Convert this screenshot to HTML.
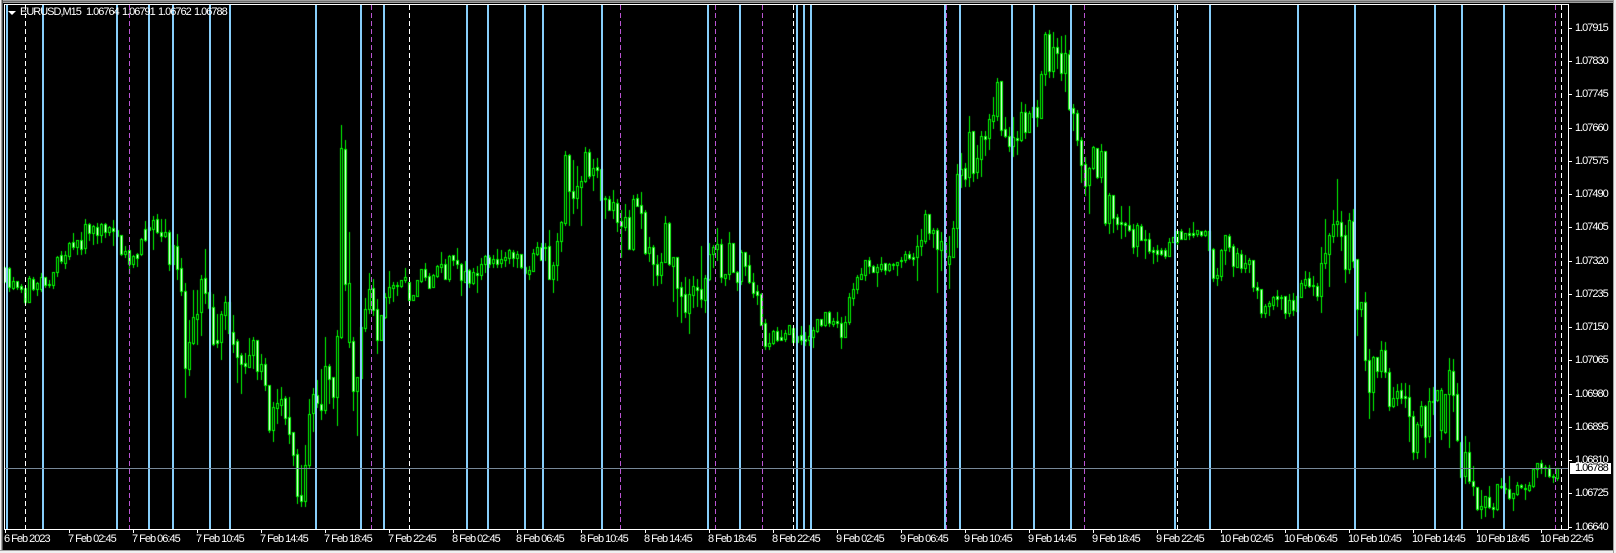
<!DOCTYPE html>
<html><head><meta charset="utf-8"><title>EURUSD,M15</title>
<style>
html,body{margin:0;padding:0;background:#000;width:1616px;height:553px;overflow:hidden}
body{position:relative;font-family:"Liberation Sans",sans-serif;color:#fff}
.a{position:absolute}
canvas{position:absolute;left:0;top:0}
.b{position:absolute;top:5px;height:524px;width:2px;background:#87cefa}
.p,.w{position:absolute;top:5px;height:524px;width:1px}
.p{background:repeating-linear-gradient(to bottom,#ba55d3 0 5px,transparent 5px 8px)}
.w{background:repeating-linear-gradient(to bottom,#fff 0 5px,transparent 5px 8px)}
.t{position:absolute;font-size:11px;letter-spacing:-1px;line-height:12px;height:12px;white-space:nowrap;color:#fff}
.y{left:1575px}
.x{top:533px}
.yt{position:absolute;left:1569px;width:3px;height:1px;background:#fff}
.xt{position:absolute;top:530px;width:1px;height:3px;background:#fff}
</style></head><body>
<canvas id="c" width="1616" height="553"></canvas>

<div class="a" style="left:0;top:0;width:1616px;height:1px;background:#a0a0a0"></div>
<div class="a" style="left:0;top:1px;width:1616px;height:1px;background:#696969"></div>
<div class="a" style="left:0;top:2px;width:1616px;height:1px;background:#a0a0a0"></div>
<div class="a" style="left:0;top:0;width:1px;height:553px;background:#f0f0f0"></div>
<div class="a" style="left:1px;top:0;width:1px;height:553px;background:#a0a0a0"></div>
<div class="a" style="left:2px;top:0;width:1px;height:553px;background:#505050"></div>
<div class="a" style="left:0;top:550px;width:1616px;height:1px;background:#a0a0a0"></div>
<div class="a" style="left:0;top:551px;width:1616px;height:2px;background:#f0f0f0"></div>
<div class="a" style="left:1613px;top:0;width:1px;height:553px;background:#a0a0a0"></div>
<div class="a" style="left:1614px;top:0;width:2px;height:553px;background:#f0f0f0"></div>

<div class="w" style="left:25px"></div><div class="w" style="left:409px"></div><div class="w" style="left:793px"></div><div class="w" style="left:1177px"></div><div class="w" style="left:1561px"></div>
<div class="p" style="left:129px"></div><div class="p" style="left:371px"></div><div class="p" style="left:620px"></div><div class="p" style="left:715px"></div><div class="p" style="left:762px"></div><div class="p" style="left:946px"></div><div class="p" style="left:1084px"></div><div class="p" style="left:1555px"></div>

<div class="b" style="left:6px"></div><div class="b" style="left:42px"></div><div class="b" style="left:116px"></div><div class="b" style="left:148px"></div><div class="b" style="left:172px"></div><div class="b" style="left:209px"></div><div class="b" style="left:229px"></div><div class="b" style="left:315px"></div><div class="b" style="left:360px"></div><div class="b" style="left:383px"></div><div class="b" style="left:466px"></div><div class="b" style="left:487px"></div><div class="b" style="left:524px"></div><div class="b" style="left:542px"></div><div class="b" style="left:601px"></div><div class="b" style="left:707px"></div><div class="b" style="left:739px"></div><div class="b" style="left:796px"></div><div class="b" style="left:803px"></div><div class="b" style="left:810px"></div><div class="b" style="left:944px"></div><div class="b" style="left:959px"></div><div class="b" style="left:1011px"></div><div class="b" style="left:1033px"></div><div class="b" style="left:1070px"></div><div class="b" style="left:1174px"></div><div class="b" style="left:1209px"></div><div class="b" style="left:1297px"></div><div class="b" style="left:1354px"></div><div class="b" style="left:1434px"></div><div class="b" style="left:1461px"></div><div class="b" style="left:1503px"></div>

<div class="a" style="left:5px;top:468px;width:1563px;height:1px;background:#778899"></div>

<div class="a" style="left:4px;top:4px;width:1565px;height:1px;background:#fff"></div>
<div class="a" style="left:4px;top:4px;width:1px;height:526px;background:#fff"></div>
<div class="a" style="left:1568px;top:4px;width:1px;height:526px;background:#fff"></div>
<div class="a" style="left:4px;top:529px;width:1565px;height:1px;background:#fff"></div>

<div class="a" style="left:8px;top:11px;width:0;height:0;border-left:4px solid transparent;border-right:4px solid transparent;border-top:4px solid #fff"></div>
<div class="t" style="left:20px;top:6px">EURUSD,M15</div>
<div class="t" style="left:86px;top:6px">1.06764</div>
<div class="t" style="left:122px;top:6px">1.06791</div>
<div class="t" style="left:158px;top:6px">1.06762</div>
<div class="t" style="left:194px;top:6px">1.06788</div>

<div class="yt" style="top:28px"></div><div class="yt" style="top:61px"></div><div class="yt" style="top:94px"></div><div class="yt" style="top:128px"></div><div class="yt" style="top:161px"></div><div class="yt" style="top:194px"></div><div class="yt" style="top:227px"></div><div class="yt" style="top:261px"></div><div class="yt" style="top:294px"></div><div class="yt" style="top:327px"></div><div class="yt" style="top:360px"></div><div class="yt" style="top:394px"></div><div class="yt" style="top:427px"></div><div class="yt" style="top:460px"></div><div class="yt" style="top:493px"></div><div class="yt" style="top:527px"></div>

<div class="t y" style="top:22px">1.07915</div>
<div class="t y" style="top:55px">1.07830</div>
<div class="t y" style="top:88px">1.07745</div>
<div class="t y" style="top:122px">1.07660</div>
<div class="t y" style="top:155px">1.07575</div>
<div class="t y" style="top:188px">1.07490</div>
<div class="t y" style="top:221px">1.07405</div>
<div class="t y" style="top:255px">1.07320</div>
<div class="t y" style="top:288px">1.07235</div>
<div class="t y" style="top:321px">1.07150</div>
<div class="t y" style="top:354px">1.07065</div>
<div class="t y" style="top:388px">1.06980</div>
<div class="t y" style="top:421px">1.06895</div>
<div class="t y" style="top:454px">1.06810</div>
<div class="t y" style="top:487px">1.06725</div>
<div class="t y" style="top:521px">1.06640</div>
<div class="a" style="left:1570px;top:463px;width:41px;height:11px;background:#fff"></div>
<div class="t y" style="top:462px;color:#000">1.06788</div>

<div class="xt" style="left:5px"></div><div class="xt" style="left:69px"></div><div class="xt" style="left:133px"></div><div class="xt" style="left:197px"></div><div class="xt" style="left:261px"></div><div class="xt" style="left:325px"></div><div class="xt" style="left:389px"></div><div class="xt" style="left:453px"></div><div class="xt" style="left:517px"></div><div class="xt" style="left:581px"></div><div class="xt" style="left:645px"></div><div class="xt" style="left:709px"></div><div class="xt" style="left:773px"></div><div class="xt" style="left:837px"></div><div class="xt" style="left:901px"></div><div class="xt" style="left:965px"></div><div class="xt" style="left:1029px"></div><div class="xt" style="left:1093px"></div><div class="xt" style="left:1157px"></div><div class="xt" style="left:1221px"></div><div class="xt" style="left:1285px"></div><div class="xt" style="left:1349px"></div><div class="xt" style="left:1413px"></div><div class="xt" style="left:1477px"></div><div class="xt" style="left:1541px"></div>

<div class="t x" style="left:4px">6 Feb 2023</div>
<div class="t x" style="left:68px">7 Feb 02:45</div>
<div class="t x" style="left:132px">7 Feb 06:45</div>
<div class="t x" style="left:196px">7 Feb 10:45</div>
<div class="t x" style="left:260px">7 Feb 14:45</div>
<div class="t x" style="left:324px">7 Feb 18:45</div>
<div class="t x" style="left:388px">7 Feb 22:45</div>
<div class="t x" style="left:452px">8 Feb 02:45</div>
<div class="t x" style="left:516px">8 Feb 06:45</div>
<div class="t x" style="left:580px">8 Feb 10:45</div>
<div class="t x" style="left:644px">8 Feb 14:45</div>
<div class="t x" style="left:708px">8 Feb 18:45</div>
<div class="t x" style="left:772px">8 Feb 22:45</div>
<div class="t x" style="left:836px">9 Feb 02:45</div>
<div class="t x" style="left:900px">9 Feb 06:45</div>
<div class="t x" style="left:964px">9 Feb 10:45</div>
<div class="t x" style="left:1028px">9 Feb 14:45</div>
<div class="t x" style="left:1092px">9 Feb 18:45</div>
<div class="t x" style="left:1156px">9 Feb 22:45</div>
<div class="t x" style="left:1220px">10 Feb 02:45</div>
<div class="t x" style="left:1284px">10 Feb 06:45</div>
<div class="t x" style="left:1348px">10 Feb 10:45</div>
<div class="t x" style="left:1412px">10 Feb 14:45</div>
<div class="t x" style="left:1476px">10 Feb 18:45</div>
<div class="t x" style="left:1540px">10 Feb 22:45</div>

<script>
var blocks=[
[0,190,"16,230,275,230,275,w 28,235,292,232,303,w 40,274,293,262,296,b 52,274,290,272,296,w 64,289,296,283,306,w 76,295,335,295,342,w 88,265,335,258,336,b 100,268,296,262,300,w 112,280,297,275,315,b 124,262,297,250,303,b 136,262,284,262,290,w 148,283,285,270,290,w 160,247,284,247,295,b 172,201,247,198,258,b 184,196,214,183,218,w 196,195,218,183,234,b 208,160,197,155,207,b 220,157,170,128,177,w 232,151,170,150,192,b 244,151,176,126,191,w 256,103,173,87,190,b 268,103,130,100,150,w 280,109,129,105,162,b 292,112,136,100,158,w 304,103,134,98,155,b 316,103,125,100,140,w 328,112,125,108,135,b 340,115,124,90,165,w 352,120,138,120,138,w 364,136,191,136,195,w 376,184,191,168,200,b 388,181,221,181,250,w 400,198,221,196,231,b 412,192,203,188,228,w 424,148,191,145,195,b 436,118,149,93,152,w 448,110,120,110,120,w 460,91,116,78,177,b 472,88,125,72,128,w 484,127,137,87,153,w 496,127,137,87,140,b 508,127,221,120,240,w 520,165,222,165,222,b 532,169,236,132,266,w 544,235,302,204,315,w 556,304,533,280,620,w 568,457,537,390,555,b 580,382,458,300,463,b 592,373,386,300,462,b 604,268,365,255,435,b 616,265,308,177,340,w 628,306,353,306,353,w 640,352,461,312,465,w 652,451,458,372,472,w 664,373,455,362,506,b 676,337,374,318,418,b 688,337,430,337,430,b 700,427,461,375,487,w 712,454,500,447,575,w 724,496,521,490,608,w 736,520,527,490,548,w 748,496,530,445,530,b 760,451,494,441,533,b 772,451,542,451,567,w 784,523,543,491,567,b 796,523,584,503,600,w 808,586,720,586,725,w 820,652,720,636,752,b 832,640,653,598,698,b 844,628,644,591,675,b 856,625,683,618,702,w 868,682,731,622,758,w 880,727,794,727,825,w 892,793,917,778,938,w 904,916,932,825,947,w 916,826,932,765,947,b 928,673,824,627,834,b 940,613,670,593,722,b 952,615,640,570,650,w 964,643,659,537,687,w 976,529,659,441,668,b 988,529,566,522,640,w 1000,562,620,562,655,w 1012,439,620,420,705,b 1024,-126,440,-195,445,b 1036,-122,281,-150,300,w 1048,280,455,126,470,b 1060,454,602,442,660,w 1072,562,602,562,735,b 1084,412,563,412,563,b 1096,358,413,325,423,b 1108,298,357,250,370,b 1120,295,360,267,375,w 1132,358,449,328,488,w 1144,376,449,376,450,b 1156,322,380,310,385,b 1168,292,322,243,338,b 1180,286,293,277,333,b 1192,285,288,277,316,w"],
[400,130,"4,451,467,451,470,b 16,442,449,415,455,b 28,457,509,457,512,w 40,496,509,496,510,b 52,451,497,451,497,b 64,418,453,418,456,b 76,418,440,400,450,w 88,439,473,430,473,w 100,436,470,433,470,b 112,408,437,405,440,b 124,401,410,366,425,b 136,401,446,388,448,w 148,379,446,376,453,b 160,376,389,376,405,w 172,391,401,354,415,w 184,402,449,400,495,w 196,422,455,393,455,b 208,421,458,418,472,w 220,427,458,415,462,b 232,430,434,407,486,w 244,403,434,385,447,b 256,379,402,376,427,b 268,382,401,375,411,w 280,388,399,375,411,b 292,388,402,358,412,w 304,388,399,361,410,b 316,382,389,365,408,b 328,361,383,357,400,b 340,365,383,360,408,w 352,373,383,362,410,b 364,373,410,372,413,w 376,410,430,408,432,w 388,421,431,408,447,b 400,370,422,358,422,b 412,352,372,335,375,b 424,350,390,340,390,w 436,350,353,340,390,w 448,347,446,300,446,w 460,406,446,395,486,b 472,334,406,308,450,b 484,277,334,273,363,b 496,76,278,63,285,b 508,76,182,72,285,w 520,184,203,90,248,w 532,169,203,108,235,b 544,154,172,138,285,b 556,67,154,52,157,b 568,67,137,57,145,w 580,113,134,87,180,b 592,112,119,84,140,w 604,118,210,118,210,w 616,205,208,198,264,w 628,208,239,198,241,w 640,217,239,180,265,b 652,220,275,207,303,w 664,272,289,240,380,w 676,262,290,222,300,b 688,262,356,240,358,w 700,208,356,195,360,b 712,205,227,192,228,w 724,226,248,186,294,w 736,247,370,240,372,w 748,352,368,322,392,b 760,352,403,345,465,w 772,403,434,375,465,w 784,397,434,368,458,b 796,280,395,258,397,b 808,280,403,275,405,w 820,382,407,380,513,b 832,382,473,380,558,w 844,472,497,457,575,w 856,493,545,440,560,w 868,493,548,447,608,b 880,469,494,438,530,b 892,472,479,447,528,w 904,478,506,348,530,w 916,445,509,435,545,b 928,372,447,340,450,b 940,352,373,345,410,b 952,343,357,293,390,b 964,343,440,327,456,w 976,433,443,433,465,b 988,340,431,306,446,b 1000,340,425,340,425,w 1012,427,455,422,480,w 1024,367,453,360,462,b 1036,367,407,367,436,w 1048,406,455,375,460,w 1060,457,488,430,500,w 1072,484,494,465,522,w 1084,493,584,490,585,w 1096,580,647,567,657,w 1108,640,647,608,657,b 1120,603,640,600,643,b 1132,603,630,590,632,w 1144,622,629,600,630,w 1156,610,627,600,632,b 1168,586,611,586,611,b 1180,595,635,595,637,w 1192,618,636,618,636,w"],
[800,20,"4,946,961,918,972,w 16,958,962,937,975,w 28,948,960,915,975,b 40,931,950,922,980,b 52,898,933,898,935,b 64,898,915,898,917,w 76,877,915,877,917,b 88,877,908,873,918,w 100,904,912,895,918,b 112,904,908,877,922,w 124,910,950,892,984,w 136,905,950,888,950,b 148,832,905,820,912,b 160,808,833,790,855,b 172,772,806,765,818,b 184,763,776,745,776,b 196,721,764,721,780,b 208,721,737,712,760,w 220,737,755,735,755,w 232,742,755,732,798,b 244,733,746,712,752,b 256,730,749,728,762,w 268,733,749,730,752,b 280,732,735,730,748,w 292,725,734,725,765,b 304,720,724,712,740,w 316,703,719,693,725,b 328,703,714,693,718,w 340,712,716,700,735,w 352,679,712,645,780,b 364,661,677,628,705,b 376,583,662,570,668,b 388,583,638,583,657,w 400,631,638,625,681,b 412,631,688,625,815,w 424,664,689,637,750,b 436,670,710,670,710,b 448,709,731,648,803,b 460,625,710,603,710,b 472,463,625,432,680,b 484,448,465,400,500,b 496,445,476,430,497,w 508,337,470,288,497,b 520,334,458,334,482,w 532,415,456,375,473,b 544,349,416,333,467,b 556,349,356,333,404,w 568,298,353,282,387,b 580,286,302,232,323,b 592,187,288,175,300,b 604,184,329,184,345,w 616,328,347,292,352,w 628,349,377,320,392,w 640,352,377,292,408,b 652,355,361,333,402,w 664,277,359,246,362,b 676,277,335,252,353,w 688,280,335,273,335,b 700,262,290,262,290,b 712,262,290,240,318,w 724,163,293,153,295,b 736,43,163,37,195,b 748,43,152,30,170,w 760,82,152,37,170,b 772,80,100,55,145,w 784,98,158,48,180,w 796,100,158,45,213,b 808,103,267,90,270,w 820,265,280,252,330,w 832,280,359,270,375,w 844,361,434,352,485,w 856,431,497,410,525,w 868,445,495,440,578,b 880,381,445,378,448,b 892,385,471,385,473,w 904,394,470,372,486,b 916,394,608,394,615,w 928,526,608,520,638,b 940,526,593,526,635,w 952,592,611,582,628,w 964,606,612,558,653,w 976,610,614,606,648,w 988,614,630,558,632,w 1000,628,680,612,698,w 1012,616,677,608,707,b 1024,619,659,612,660,w 1036,657,660,630,713,w 1048,658,692,640,698,w 1060,690,695,680,728,w 1072,691,701,675,722,w 1084,691,701,685,705,w 1096,691,707,685,713,w 1108,667,707,655,707,b 1120,652,667,652,667,b 1132,634,665,634,683,b 1144,632,656,628,658,w 1156,640,656,640,656,b 1168,640,644,625,656,w 1180,640,644,606,650,w 1192,631,641,631,648,b"],
[1180,170,"64,184,195,184,197,w 76,184,195,180,197,b 88,184,240,184,240,b 100,238,323,235,333,w 112,316,323,295,345,b 124,240,317,238,330,b 136,196,241,196,283,b 148,199,231,193,243,w 160,229,287,222,318,w 172,250,290,235,292,b 184,253,294,241,306,w 196,280,294,256,305,b 208,270,281,265,305,b 220,271,351,271,362,w 232,351,359,337,385,w 244,358,428,358,440,w 256,408,429,402,441,b 268,400,407,392,435,b 280,381,404,378,417,b 292,379,386,360,408,w 304,382,385,376,417,w 316,379,428,379,443,w 328,391,428,372,438,b 340,391,419,370,435,w 352,378,422,378,422,b 364,340,380,330,380,b 376,328,344,303,353,b 388,325,347,306,352,w 400,346,348,318,374,w 412,347,377,340,390,w 424,280,377,232,425,b 436,250,278,147,293,b 448,196,251,190,347,b 460,163,197,120,215,b 472,154,163,27,197,b 484,157,197,123,240,w 496,196,298,165,335,w 508,151,296,130,308,b 520,153,272,118,290,w 532,268,416,268,495,w 544,397,417,397,437,b 556,397,569,367,600,w 568,569,665,538,743,w 580,562,665,558,720,b 592,560,602,560,622,w 604,541,603,514,620,b 616,541,607,517,622,w 628,607,707,593,720,w 640,685,708,650,712,b 652,664,683,642,705,b 664,661,683,640,698,w 676,679,683,640,710,w 688,682,737,645,812,w 700,737,845,722,867,w 712,763,845,755,865,b 724,709,766,693,770,b 736,708,800,705,860,w 748,694,797,653,815,b 760,692,695,652,732,b 772,661,691,661,692,b 784,661,781,655,808,b 796,673,785,673,788,b 808,601,673,565,832,b 820,604,674,567,722,w 832,673,811,640,813,w 844,815,920,815,920,w 856,847,917,798,940,b 868,847,932,815,940,w 880,934,949,888,975,w 892,952,1016,950,1019,w 904,1009,1016,960,1043,b 916,979,1010,979,1037,b 928,982,1010,948,1015,w 940,1010,1018,998,1040,w 952,943,1018,943,1020,b 964,947,952,925,955,w 976,953,957,940,970,w 988,958,983,918,986,w 1000,970,983,970,1019,b 1012,946,971,936,974,b 1024,946,952,942,955,w 1036,954,958,942,986,w 1048,946,960,936,962,b 1060,897,947,897,950,b 1072,880,896,878,920,b 1084,880,893,870,910,w 1096,892,895,885,918,w 1108,895,919,885,920,w 1120,919,922,913,935,w 1132,895,924,893,930,b"]
];
var g=document.getElementById("c").getContext("2d");
g.fillStyle="#000";g.fillRect(0,0,1616,553);
blocks.forEach(function(B){
  B[2].split(" ").forEach(function(s){
    var v=s.split(","),X=Math.floor(B[0]+v[0]/3),
        Y=function(z){return Math.round(B[1]+z/3)},
        t=Y(+v[1]),b=Y(+v[2]),h=Y(+v[3]),l=Y(+v[4]);
    if(b<=t)b=t+1;
    g.fillStyle="#00ff00";
    g.fillRect(X,h,1,Math.max(1,l-h+1));
    g.fillRect(X-1,t,3,b-t+1);
    if(b-t>=2){
      g.fillStyle=v[5]=="w"?"#ffffff":"#000000";
      g.fillRect(X,t+1,1,b-t-1);
    }
  });
});
</script>
</body></html>
